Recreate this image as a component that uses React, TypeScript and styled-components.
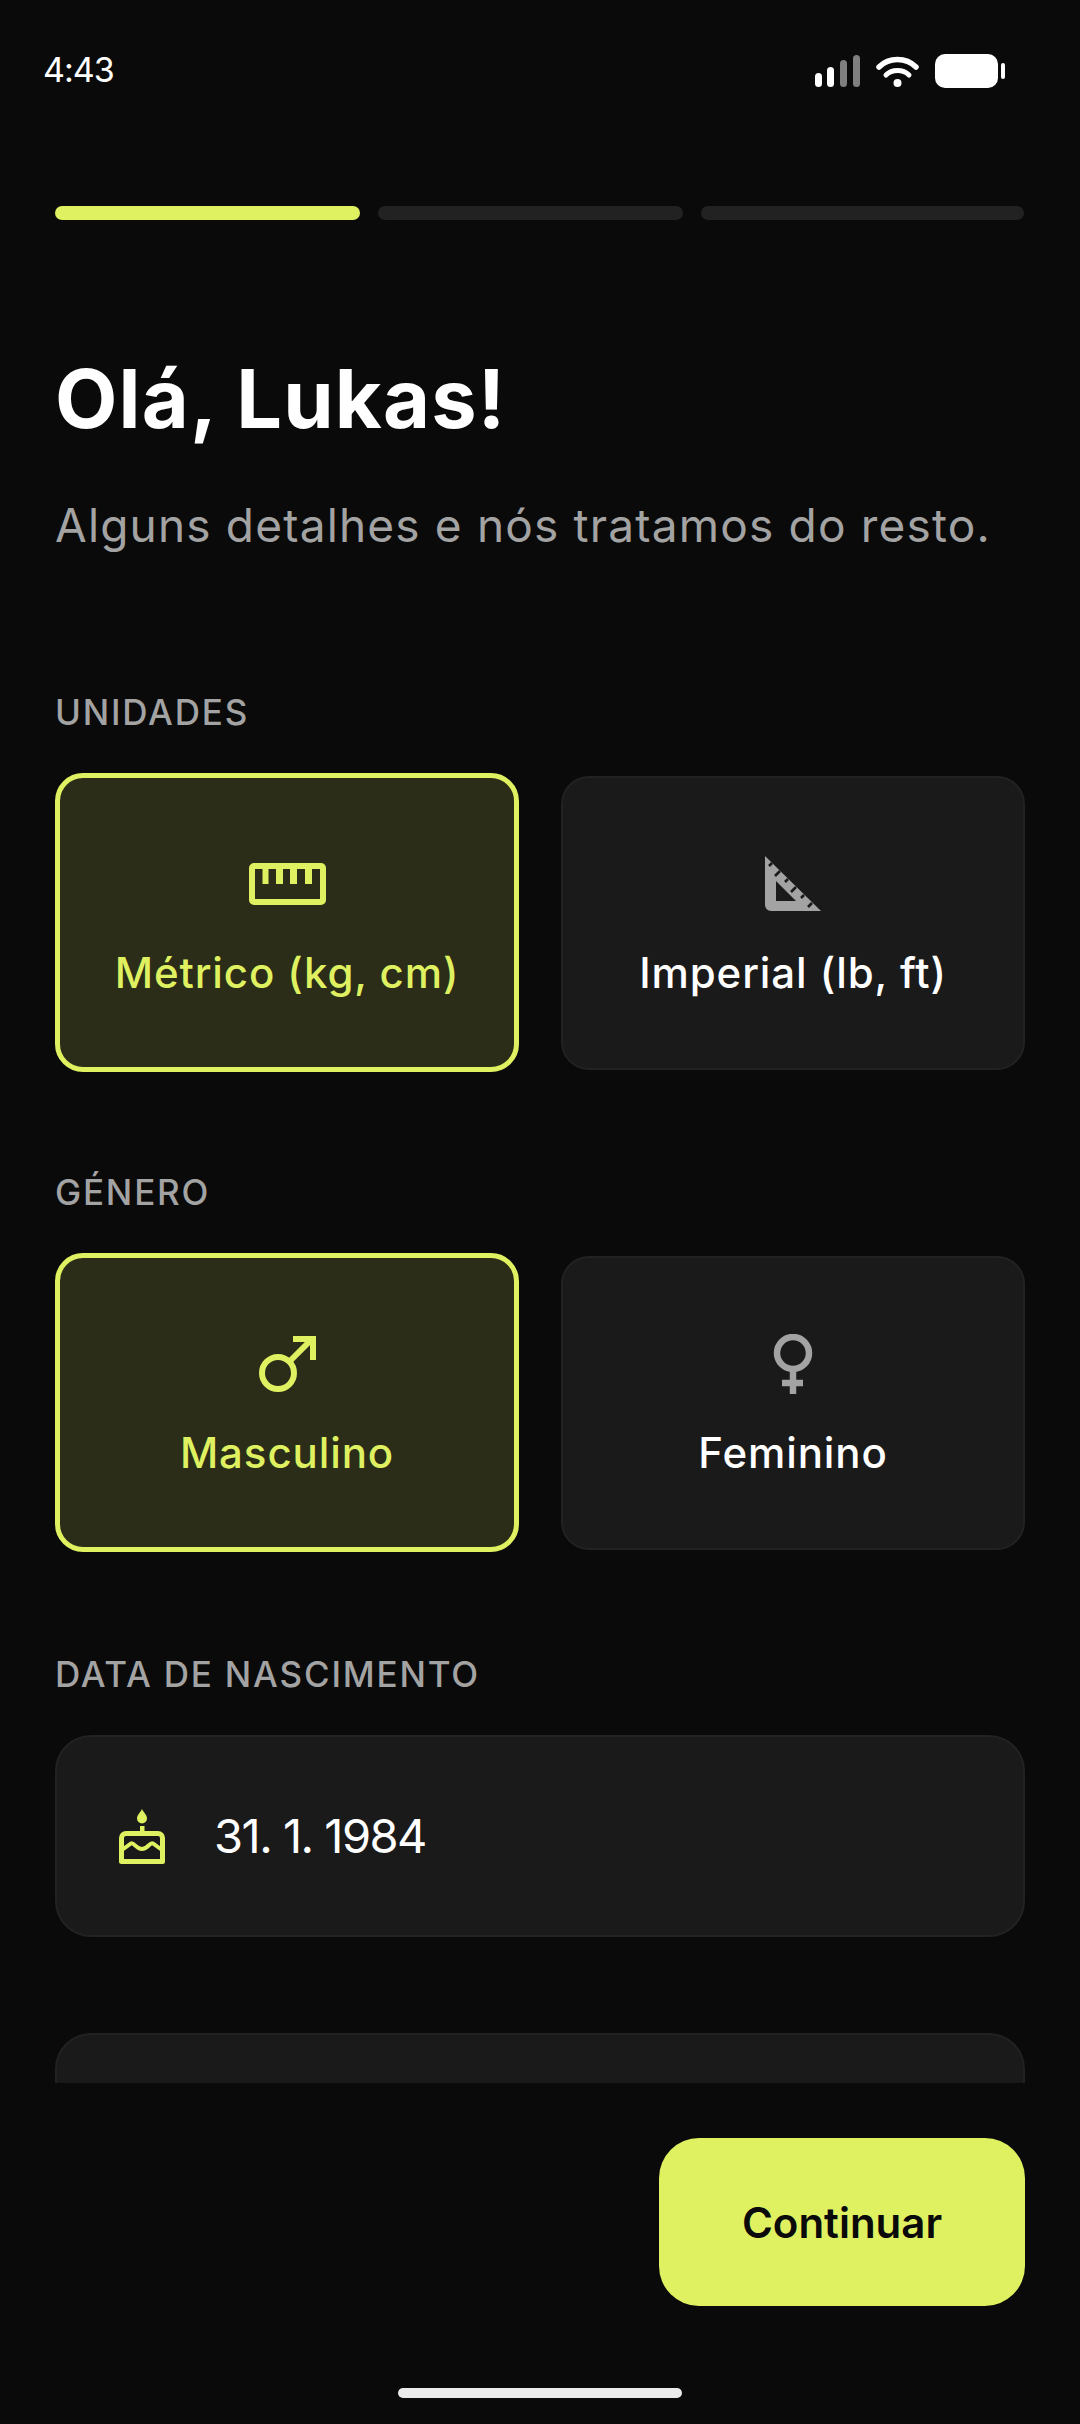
import React from "react";
import styled, { createGlobalStyle } from "styled-components";

const ACCENT = "#dff060";
const MUTED = "#a3a3a3";
const FONT = `"Inter", "Noto Sans", "Liberation Sans", sans-serif`;

const Global = createGlobalStyle`
  html, body { margin: 0; padding: 0; background: #0a0a0a; }
  * { box-sizing: border-box; }
`;

const Screen = styled.div`
  width: 1080px;
  height: 2424px;
  background: #0a0a0a;
  color: #fff;
  font-family: ${FONT};
  display: flex;
  flex-direction: column;
  overflow: hidden;
`;

const StatusBar = styled.div`
  height: 206px;
  flex: none;
  padding: 50px 55px 0 43px;
  display: flex;
  justify-content: space-between;
  align-items: flex-start;
`;

const Time = styled.div`
  font-size: 34px;
  line-height: 40px;
  letter-spacing: -1px;
`;

const StatusIcons = styled.div`
  display: flex;
  align-items: center;
  gap: 16px;
  margin-top: 4px;
  margin-right: 20px;
`;

const Progress = styled.div`
  flex: none;
  padding: 0 55px;
  display: grid;
  grid-template-columns: 305px 305px 323px;
  gap: 18px;
`;

const Segment = styled.div<{ $on?: boolean }>`
  height: 14px;
  border-radius: 7px;
  background: ${(p) => (p.$on ? ACCENT : "#222222")};
`;

const Scroll = styled.div`
  height: 1863px;
  flex: none;
  overflow: hidden;
  padding: 0 55px;
`;

const Title = styled.h1`
  margin: 136px 0 0;
  font-size: 81px;
  line-height: 86px;
  font-weight: 700;
  letter-spacing: 1.2px;
`;

const Subtitle = styled.p`
  margin: 55px 0 0;
  font-size: 46px;
  line-height: 56px;
  font-weight: 400;
  letter-spacing: 1.17px;
  color: ${MUTED};
`;

const SectionLabel = styled.div<{ $top: number }>`
  margin-top: ${(p) => p.$top}px;
  font-size: 35px;
  line-height: 42px;
  font-weight: 500;
  letter-spacing: 1.8px;
  color: ${MUTED};
`;

const Options = styled.div`
  margin-top: 40px;
  display: grid;
  grid-template-columns: 1fr 1fr;
  gap: 42px;
  align-items: center;
`;

const Option = styled.div<{ $on?: boolean }>`
  height: ${(p) => (p.$on ? 299 : 294)}px;
  border-radius: 28px;
  border: ${(p) => (p.$on ? `5px solid ${ACCENT}` : "2px solid #222222")};
  background: ${(p) => (p.$on ? "#2b2d19" : "#1a1a1a")};
  color: ${(p) => (p.$on ? ACCENT : "#ffffff")};
  display: flex;
  flex-direction: column;
  align-items: center;
`;

const IconSlot = styled.div`
  height: 60px;
  margin-top: 76px;
  display: flex;
  align-items: center;
  justify-content: center;
  flex: none;
`;

const OptionText = styled.div`
  margin-top: 33px;
  font-size: 42px;
  line-height: 52px;
  font-weight: 550;
  letter-spacing: 0.9px;
`;

const DateField = styled.div`
  margin-top: 40px;
  height: 202px;
  border-radius: 36px;
  border: 2px solid #222222;
  background: #1a1a1a;
  display: flex;
  align-items: center;
  gap: 49px;
  padding-left: 62px;
`;

const DateValue = styled.div`
  font-size: 47px;
  line-height: 56px;
  font-weight: 370;
  letter-spacing: -1.5px;
`;

const NextField = styled(DateField)`
  margin-top: 96px;
`;

const Footer = styled.div`
  flex: none;
  padding: 55px 55px 0;
  display: flex;
  justify-content: flex-end;
`;

const PrimaryButton = styled.button`
  width: 366px;
  height: 168px;
  border: none;
  border-radius: 40px;
  background: ${ACCENT};
  color: #0a0a0a;
  font-family: ${FONT};
  font-size: 42px;
  font-weight: 600;
`;

const HomeBar = styled.div`
  flex: none;
  width: 284px;
  height: 10px;
  margin: 82px auto 0;
  border-radius: 5px;
  background: #ebebeb;
`;

const Signal = () => (
  <svg width="45" height="32" viewBox="0 0 45 32">
    <rect x="0" y="18" width="7" height="14" rx="3.5" fill="#fff" />
    <rect x="12" y="12" width="7" height="20" rx="3.5" fill="#fff" />
    <rect x="25" y="5" width="7" height="27" rx="3.5" fill="#7f7f7f" />
    <rect x="38" y="0" width="7" height="32" rx="3.5" fill="#7f7f7f" />
  </svg>
);

const Wifi = () => (
  <svg width="43" height="32" viewBox="0 0 43 32" fill="none" stroke="#fff" strokeLinecap="round">
    <path d="M3 12C13 2 30 2 40 12" strokeWidth="5.5" />
    <path d="M10 20C16 14 27 14 33 20" strokeWidth="5" />
    <circle cx="21.5" cy="28" r="4" fill="#fff" stroke="none" />
  </svg>
);

const Battery = () => (
  <svg width="70" height="34" viewBox="0 0 70 34">
    <rect x="0" y="0" width="63" height="34" rx="10" fill="#fff" />
    <rect x="66" y="9" width="4" height="16" rx="2" fill="#fff" />
  </svg>
);

const RulerIcon = () => (
  <svg width="77" height="42" viewBox="0 0 77 42" fill={ACCENT}>
    <path
      fillRule="evenodd"
      d="M5 0H72A5 5 0 0 1 77 5V37A5 5 0 0 1 72 42H5A5 5 0 0 1 0 37V5A5 5 0 0 1 5 0ZM6 6V36H71V6H63V21H56V6H48V21H41V6H34V21H27V6H19.500V21H13.500V6Z"
    />
  </svg>
);

const SquareIcon = () => (
  <svg width="56" height="55" viewBox="0 0 56 55">
    <path
      fill={MUTED}
      fillRule="evenodd"
      d="M0 0L56 55H6A6 6 0 0 1 0 49ZM11 25V45H31Z"
    />
    <g stroke="#1a1a1a" strokeWidth="2.6">
      <path d="M7 7L4 10" />
      <path d="M15 15L10 20" />
      <path d="M23 23L20 26" />
      <path d="M31 31L26 36" />
      <path d="M39 39L36 42" />
      <path d="M47 47L43 51" />
    </g>
  </svg>
);

const MaleIcon = () => (
  <svg width="57" height="56" viewBox="0 0 57 56" fill="none" stroke={ACCENT} strokeWidth="6">
    <circle cx="19" cy="37" r="16" />
    <path d="M31 25L53 3" />
    <path d="M34 3H54V24" />
  </svg>
);

const FemaleIcon = () => (
  <svg width="40" height="60" viewBox="0 0 40 60" fill="none" stroke={MUTED} strokeWidth="6.5">
    <circle cx="20" cy="19" r="16" />
    <path d="M20 35V60" />
    <path d="M9 49H30" />
  </svg>
);

const CakeIcon = () => (
  <svg width="46" height="55" viewBox="0 0 46 55" fill="none">
    <path d="M23 0C25 4 28 6 28 9.500A5 5 0 0 1 18 9.500C18 6 21 4 23 0Z" fill={ACCENT} />
    <rect x="21" y="17" width="4.500" height="6" fill={ACCENT} />
    <path d="M7 24.500H39A4.500 4.500 0 0 1 43.500 29V52.500H2.500V29A4.500 4.500 0 0 1 7 24.500Z" stroke={ACCENT} strokeWidth="5" strokeLinejoin="round" />
    <path d="M3 41L12 34.500C15 33 17 40 23 40C29 40 30.500 33 34 34.500L43 41" stroke={ACCENT} strokeWidth="4" />
  </svg>
);

export default function App() {
  return (
    <Screen>
      <Global />
      <StatusBar>
        <Time>4:43</Time>
        <StatusIcons>
          <Signal />
          <Wifi />
          <Battery />
        </StatusIcons>
      </StatusBar>
      <Progress>
        <Segment $on />
        <Segment />
        <Segment />
      </Progress>
      <Scroll>
        <Title>Olá, Lukas!</Title>
        <Subtitle>Alguns detalhes e nós tratamos do resto.</Subtitle>
        <SectionLabel $top={138}>UNIDADES</SectionLabel>
        <Options>
          <Option $on>
            <IconSlot><RulerIcon /></IconSlot>
            <OptionText>Métrico (kg, cm)</OptionText>
          </Option>
          <Option>
            <IconSlot><SquareIcon /></IconSlot>
            <OptionText>Imperial (lb, ft)</OptionText>
          </Option>
        </Options>
        <SectionLabel $top={99}>GÉNERO</SectionLabel>
        <Options>
          <Option $on>
            <IconSlot><MaleIcon /></IconSlot>
            <OptionText>Masculino</OptionText>
          </Option>
          <Option>
            <IconSlot><FemaleIcon /></IconSlot>
            <OptionText>Feminino</OptionText>
          </Option>
        </Options>
        <SectionLabel $top={101}>DATA DE NASCIMENTO</SectionLabel>
        <DateField>
          <CakeIcon />
          <DateValue>31. 1. 1984</DateValue>
        </DateField>
        <NextField />
      </Scroll>
      <Footer>
        <PrimaryButton>Continuar</PrimaryButton>
      </Footer>
      <HomeBar />
    </Screen>
  );
}
